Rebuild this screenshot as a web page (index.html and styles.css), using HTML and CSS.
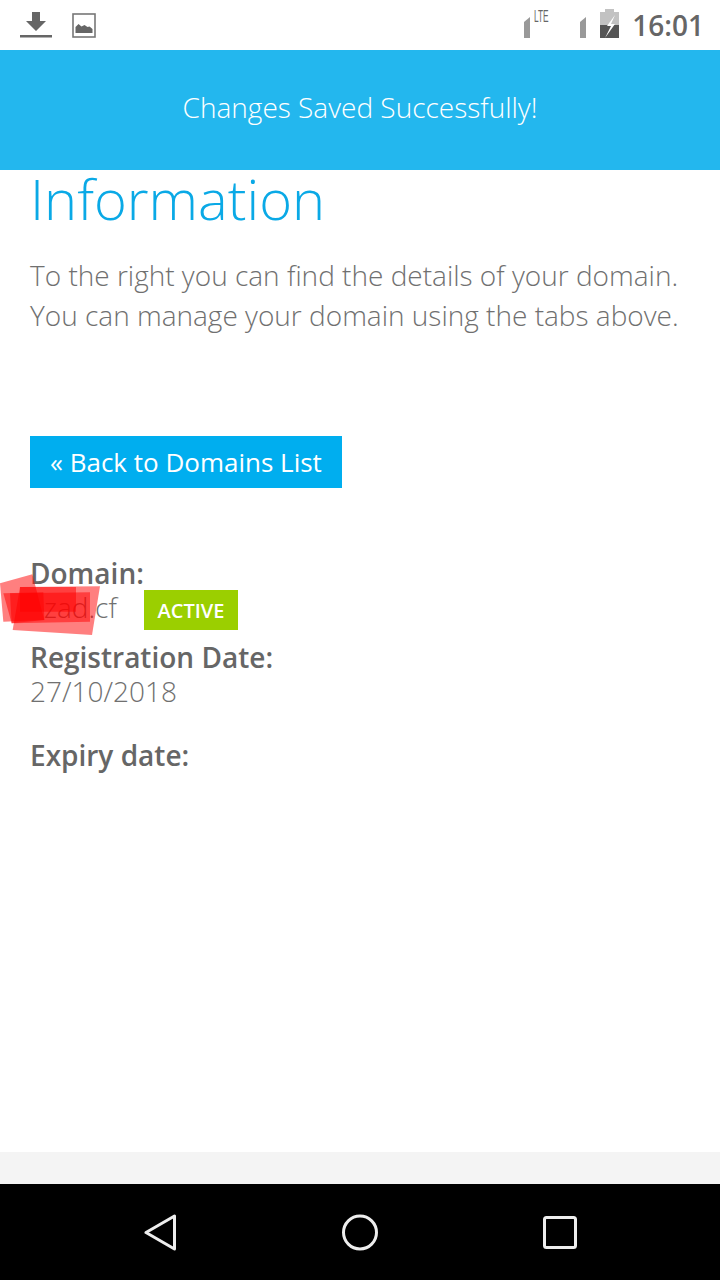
FILE: index.html
```html
<!DOCTYPE html>
<html>
<head>
    <title>Domain Information</title>
    <link rel="stylesheet" href="styles.css">
</head>
<body>
    <div class="status-bar">
        <div class="status-left">
            <svg width="34" height="26" viewBox="0 0 34 26"><path d="M13 0h8v9h6l-10 10L7 9h6z" fill="#666"/><rect x="1" y="23" width="32" height="2.500" fill="#666"/></svg>
            <svg width="24" height="25" viewBox="0 0 24 25"><rect x="1" y="1" width="22" height="23" fill="none" stroke="#777" stroke-width="1.600"/><path d="M3.500 20v-6l3-3 3 2.500 3-1.500 3 2 2-.5 3 2.500v4z" fill="#666"/></svg>
        </div>
        <div class="status-right">
            <svg class="signal-one" width="6" height="21" viewBox="0 0 6 21"><path d="M0 5 6 0v21H0z" fill="#999"/></svg>
            <span class="lte">LTE</span>
            <svg class="signal-two" width="6" height="21" viewBox="0 0 6 21"><path d="M0 5 6 0v21H0z" fill="#999"/></svg>
            <svg class="battery" width="19" height="29" viewBox="0 0 19 29"><path d="M5 0h9v3h5v13H0V3h5z" fill="#c2c2c2"/><rect y="16" width="19" height="13" fill="#555"/><path d="M15 6 7 17h4L5 29l10-14h-4z" fill="#fff"/></svg>
            <span class="clock">16:01</span>
        </div>
    </div>

    <div class="banner">Changes Saved Successfully!</div>

    <div class="content">
        <h1>Information</h1>
        <p class="intro">To the right you can find the details of your domain.<br>You can manage your domain using the tabs above.</p>
        <a class="back-button" href="#">« Back to Domains List</a>

        <div class="details">
            <div class="field-label">Domain:</div>
            <div class="domain-row">
                <span class="field-value domain-name">zad.cf</span>
                <span class="badge">ACTIVE</span>
                <!-- red marks over the blanked part of the domain -->
                <svg class="scribble" width="120" height="80" viewBox="0 0 360 240">
                    <polygon points="0,55 97,28 133,165 10,170" fill="rgba(255,0,0,0.5)"/>
                    <polygon points="60,66 300,64 276,210 38,195" fill="rgba(255,0,0,0.5)"/>
                    <polygon points="30,85 270,82 270,170 35,175" fill="rgba(255,0,0,0.5)"/>
                    <polygon points="60,66 228,66 228,140 60,140" fill="rgba(255,0,0,0.5)"/>
                    <polygon points="10,85 130,82 133,165 35,175" fill="rgba(255,0,0,0.5)"/>
                </svg>
            </div>
            <div class="field-label registration">Registration Date:</div>
            <div class="field-value date-value">27/10/2018</div>
            <div class="field-label expiry">Expiry date:</div>
        </div>
    </div>

    <div class="footer-strip"></div>

    <div class="nav-bar">
        <svg width="32" height="37" viewBox="0 0 32 37"><path d="M30.500 2v33L2 18.500z" fill="none" stroke="#eee" stroke-width="3" stroke-linejoin="round"/></svg>
        <svg width="36" height="37" viewBox="0 0 36 37"><circle cx="18" cy="18.500" r="16.500" fill="none" stroke="#eee" stroke-width="3"/></svg>
        <svg width="34" height="33" viewBox="0 0 34 33"><rect x="1.500" y="1.500" width="31" height="30" rx="2" fill="none" stroke="#eee" stroke-width="3"/></svg>
    </div>
</body>
</html>
```

FILE: styles.css
```css
* {
    box-sizing: border-box;
}

body {
    margin: 0;
    width: 720px;
    height: 1280px;
    display: flex;
    flex-direction: column;
    font-family: "Open Sans", sans-serif;
    background-color: #fff;
    color: #666;
    overflow: hidden;
}

/* Android status bar */
.status-bar {
    height: 50px;
    flex: none;
    display: flex;
    align-items: center;
    justify-content: space-between;
    padding: 0 16px 0 19px;
}

.status-left {
    display: flex;
    align-items: center;
    gap: 19px;
}

.status-right {
    height: 50px;
    display: flex;
    align-items: flex-start;
}

.signal-one {
    margin-top: 17px;
}

.lte {
    width: 15px;
    margin: 9px 0 0 4px;
    font-family: "Liberation Sans", sans-serif;
    font-size: 16px;
    line-height: 16px;
    color: #666;
    white-space: nowrap;
    transform: scaleX(0.52);
    transform-origin: left;
}

.signal-two {
    margin: 17px 0 0 31px;
}

.battery {
    margin: 9px 0 0 14px;
}

.clock {
    margin-left: 13px;
    font-size: 28px;
    line-height: 50px;
    font-weight: 600;
    color: #666;
}

.banner {
    height: 120px;
    flex: none;
    display: flex;
    align-items: center;
    justify-content: center;
    padding-bottom: 7px;
    background-color: #23b7ee;
    color: #fff;
    font-size: 28px;
    font-weight: 300;
}

/* Main content */
.content {
    flex: 1;
    padding: 0 30px;
}

h1 {
    margin: 0;
    font-size: 56px;
    line-height: 56px;
    font-weight: 300;
    color: #0aa9e6;
}

.intro {
    margin: 29px 0 0;
    font-size: 28px;
    line-height: 40px;
    font-weight: 300;
    color: #707070;
    white-space: nowrap;
}

.back-button {
    display: inline-block;
    margin-top: 101px;
    padding: 0 20px;
    height: 52px;
    line-height: 52px;
    background-color: #00aeef;
    color: #fff;
    font-size: 26px;
    text-decoration: none;
}

.details {
    margin-top: 68px;
    font-size: 28px;
    line-height: 35px;
}

.field-label {
    font-weight: 600;
    height: 34px;
}

.field-value {
    font-weight: 300;
    color: #707070;
}

.domain-row {
    position: relative;
    display: flex;
    align-items: center;
    height: 40px;
}

.domain-name {
    width: 114px;
    margin-top: -6px;
    padding-left: 14px;
}

.badge {
    width: 94px;
    height: 40px;
    line-height: 41px;
    text-align: center;
    background-color: #9bcf00;
    color: #fff;
    font-size: 20px;
    font-weight: 600;
}

.scribble {
    position: absolute;
    left: -30px;
    top: -25px;
}

.registration {
    height: 35px;
    margin-top: 10px;
}

.date-value {
    line-height: 33px;
}

.expiry {
    margin-top: 30px;
}

.footer-strip {
    height: 32px;
    flex: none;
    background-color: #f4f4f4;
}

.nav-bar {
    height: 96px;
    flex: none;
    display: flex;
    align-items: center;
    justify-content: space-between;
    padding: 0 143px 0 144px;
    background-color: #000;
}
```
